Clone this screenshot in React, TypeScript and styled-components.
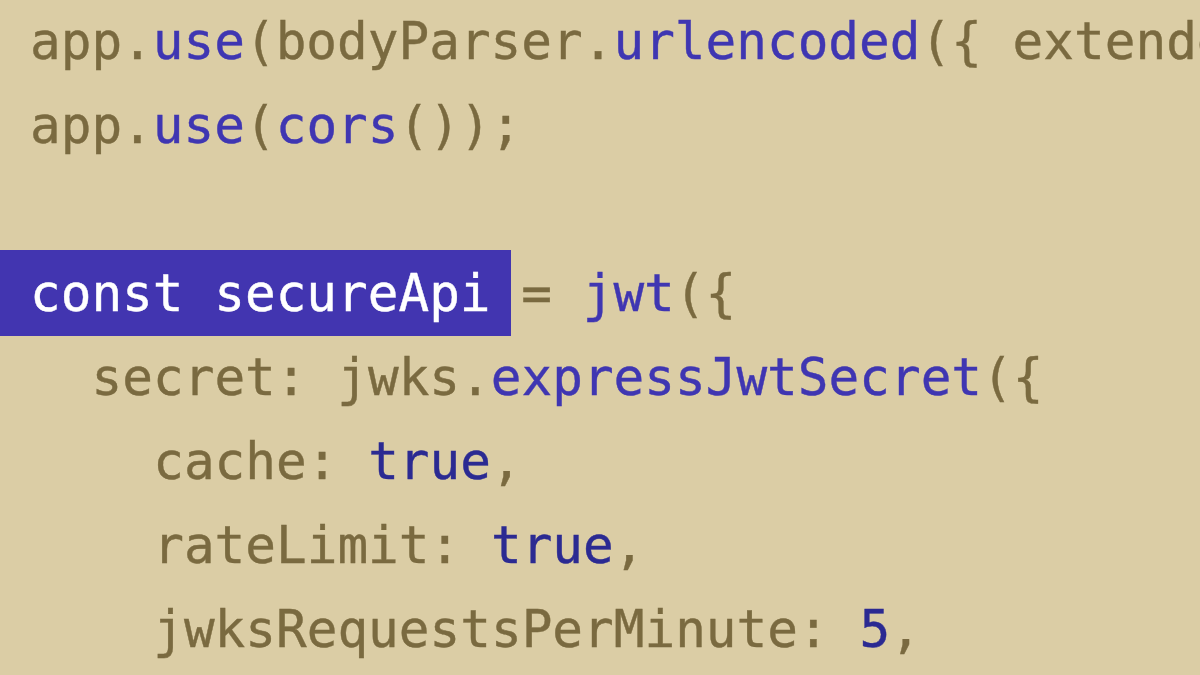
import React from "react";
import styled, { createGlobalStyle } from "styled-components";

const Global = createGlobalStyle`
  html, body { margin: 0; padding: 0; width: 1200px; height: 675px; overflow: hidden; background: #dbcda5; }
`;

const Editor = styled.div`
  width: 1200px;
  height: 675px;
  overflow: hidden;
  background: #dbcda5;
  padding-left: 30px;
  box-sizing: border-box;
  font-family: "DejaVu Sans Mono", "Liberation Mono", monospace;
  font-size: 51px;
  line-height: 84px;
  color: #7a6a40;
  -webkit-text-stroke: 0.4px currentColor;
`;

const Line = styled.div<{ $indent?: number }>`
  height: 84px;
  white-space: pre;
  padding-left: ${(p) => (p.$indent ?? 0) * 30.8}px;
`;

const Fn = styled.span`
  color: #3f36b2;
`;

const Lit = styled.span`
  color: #2b2a92;
`;

const Selection = styled.span`
  display: inline-block;
  background: #4235b0;
  color: #ffffff;
  margin: -2px -20px 0 -30px;
  padding: 0 20px 0 30px;
  height: 86px;
  line-height: 88px;
  vertical-align: top;
`;

const Rest = styled.span`
  position: relative;
`;

export default function App() {
  return (
    <>
      <Global />
      <Editor>
        <Line>
          app.<Fn>use</Fn>(bodyParser.<Fn>urlencoded</Fn>({"{"} extended: <Lit>false</Lit> {"}"}));
        </Line>
        <Line>
          app.<Fn>use</Fn>(<Fn>cors</Fn>());
        </Line>
        <Line />
        <Line>
          <Selection>const secureApi</Selection>
          <Rest> = <Fn>jwt</Fn>({"{"}</Rest>
        </Line>
        <Line $indent={2}>
          secret: jwks.<Fn>expressJwtSecret</Fn>({"{"}
        </Line>
        <Line $indent={4}>
          cache: <Lit>true</Lit>,
        </Line>
        <Line $indent={4}>
          rateLimit: <Lit>true</Lit>,
        </Line>
        <Line $indent={4}>
          jwksRequestsPerMinute: <Lit>5</Lit>,
        </Line>
      </Editor>
    </>
  );
}
